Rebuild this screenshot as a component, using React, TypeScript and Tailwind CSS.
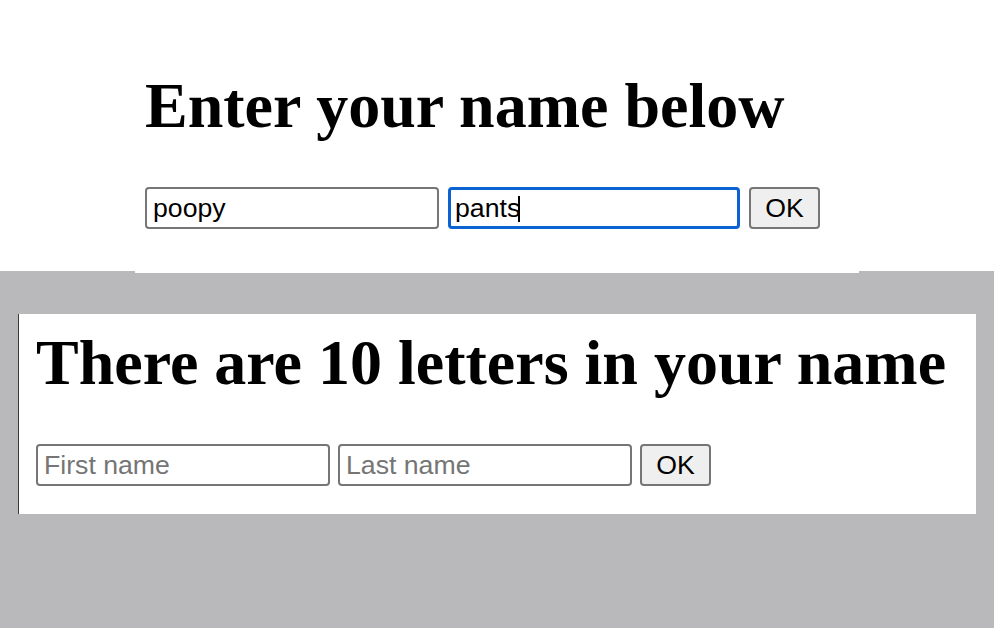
import React from "react";

const inputCore =
  "h-[42px] rounded-[4px] bg-white font-['Liberation_Sans',Arial,sans-serif] text-[26.67px] text-black outline-none placeholder:text-[#757575]";
const inputBase = `${inputCore} border-2 border-[#767676] px-[6px]`;
const buttonBase =
  "h-[42px] rounded-[4px] border-2 border-[#767676] bg-[#efefef] font-['Liberation_Sans',Arial,sans-serif] text-[26.67px] text-black leading-none flex items-center justify-center";

export default function App() {
  return (
    <div className="h-[628px] w-full overflow-hidden bg-[#b9b9bb]">
      <div className="h-[271px] w-full bg-white">
        <div className="ml-[135px] h-[273px] w-[724px] bg-white pl-[10px] pt-[69px]">
          <h1 className="whitespace-nowrap font-['Liberation_Serif','Times_New_Roman',serif] text-[64px] font-bold leading-[74px] text-black">
            Enter your name below
          </h1>
          <div className="mt-[44px] flex items-start">
            <input className={`${inputBase} w-[294px]`} defaultValue="poopy" readOnly />
            <div className="relative ml-[9px]">
              <input
                className={`${inputCore} w-[292px] border-[3px] border-[#0b62d1] px-[4px]`}
                defaultValue="pants"
                readOnly
              />
              <span className="absolute left-[70px] top-[9px] h-[26px] w-[2px] bg-black" />
            </div>
            <button className={`${buttonBase} ml-[9px] w-[71px]`}>OK</button>
          </div>
        </div>
      </div>
      <div className="ml-[18px] mt-[43px] h-[200px] w-[958px] border-l border-[#3a3a3a] bg-white pl-[17px] pt-[12px]">
        <h2 className="whitespace-nowrap font-['Liberation_Serif','Times_New_Roman',serif] text-[64px] font-bold leading-[74px] text-black">
          There are 10 letters in your name
        </h2>
        <div className="mt-[44px] flex items-start">
          <input className={`${inputBase} w-[294px]`} placeholder="First name" />
          <input className={`${inputBase} ml-[8px] w-[294px]`} placeholder="Last name" />
          <button className={`${buttonBase} ml-[8px] w-[71px]`}>OK</button>
        </div>
      </div>
    </div>
  );
}
